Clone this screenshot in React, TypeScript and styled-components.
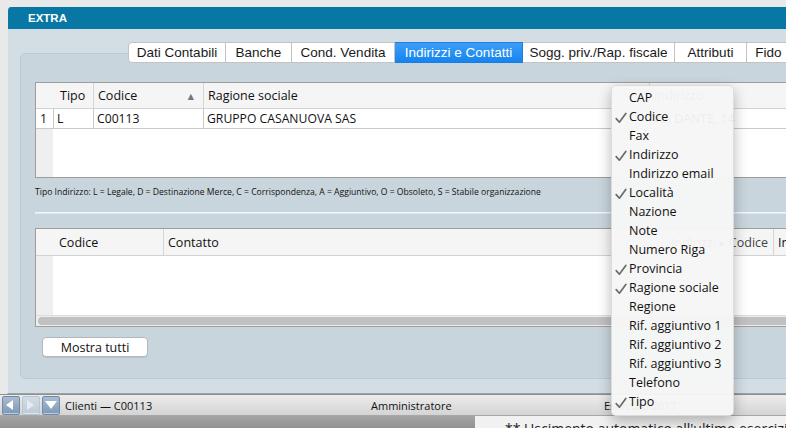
import React from 'react'
import styled, { createGlobalStyle } from 'styled-components'

const GlobalStyle = createGlobalStyle`
    html, body {
        margin: 0;
        padding: 0;
        background: #e9e9e9;
    }
    * {
        box-sizing: border-box;
    }
`

const Screen = styled.div`
    position: relative;
    width: 786px;
    height: 428px;
    overflow: hidden;
    display: flex;
    flex-direction: column;
    background: #e9e9e9;
    font-family: 'Open Sans', 'DejaVu Sans', sans-serif;
    color: #111;
`

const WindowArea = styled.div`
    height: 394px;
    padding: 7px 0 0 7px;
    flex: none;
`

const Window = styled.div`
    width: 840px;
    height: 387px;
    display: flex;
    flex-direction: column;
    border-top-left-radius: 4px;
    overflow: hidden;
    border-left: 1px solid #e4e9ec;
    border-bottom: 1px solid #9aa4aa;
`

const TitleBar = styled.div`
    height: 22px;
    flex: none;
    background: #0877a3;
    color: #fff;
    font-family: 'Liberation Sans', Arial, sans-serif;
    font-weight: bold;
    font-size: 11.5px;
    line-height: 22px;
    padding-left: 20px;
`

const Body = styled.div`
    flex: 1;
    background: #d3dee4;
    padding: 13px 0 14px 12px;
    display: flex;
    flex-direction: column;
`

const TabRow = styled.div`
    position: relative;
    z-index: 2;
    display: flex;
    height: 21px;
    padding-left: 108px;
    flex: none;
`

const Tab = styled.div<{ $w: number; $active?: boolean }>`
    width: ${(p) => p.$w}px;
    height: 21px;
    flex: none;
    display: flex;
    align-items: center;
    justify-content: center;
    font-family: 'Liberation Sans', Arial, sans-serif;
    font-size: 13.5px;
    white-space: nowrap;
    color: ${(p) => (p.$active ? '#fff' : '#1a1a1a')};
    background: ${(p) =>
        p.$active ? 'linear-gradient(#3c9ef6, #1684ee)' : '#fff'};
    border: 1px solid ${(p) => (p.$active ? '#1a7fe0' : '#c3c3c3')};
    border-left: none;
    &:first-child {
        border-left: 1px solid #c3c3c3;
        border-radius: 4px 0 0 4px;
    }
`

const Panel = styled.div`
    flex: 1;
    margin-top: -10px;
    background: #c9d5dc;
    border: 1px solid #bccad1;
    border-radius: 5px 0 0 5px;
    padding: 28px 0 0 14px;
    display: flex;
    flex-direction: column;
`

const Table = styled.div<{ $h: number; $gap?: number }>`
    height: ${(p) => p.$h}px;
    margin-top: ${(p) => p.$gap ?? 0}px;
    flex: none;
    border: 1px solid #9d9d9d;
    border-right: none;
    background: #fff;
    display: flex;
    flex-direction: column;
    font-size: 12.2px;
`

const Row = styled.div<{ $cols: string; $h: number; $head?: boolean }>`
    display: grid;
    grid-template-columns: ${(p) => p.$cols};
    height: ${(p) => p.$h}px;
    flex: none;
    background: ${(p) => (p.$head ? '#f5f5f5' : '#fff')};
    border-bottom: 1px solid ${(p) => (p.$head ? '#d2d2d2' : '#c9c9c9')};
`

const Cell = styled.div<{ $head?: boolean; $gutter?: boolean; $faded?: boolean }>`
    display: flex;
    align-items: center;
    padding-left: ${(p) => (p.$gutter ? 4 : 3)}px;
    white-space: nowrap;
    overflow: hidden;
    color: ${(p) => (p.$faded ? '#444' : '#111')};
    border-left: 1px solid
        ${(p) => (p.$gutter ? 'transparent' : p.$head ? '#d6d6d6' : '#c9c9c9')};
    &:first-child {
        border-left: none;
    }
`

const HeadLabel = styled.span<{ $indent?: number }>`
    padding-left: ${(p) => p.$indent ?? 1}px;
    flex: 1;
    font-size: 12.5px;
`

const SortArrow = styled.span`
    font-size: 8px;
    color: #777;
    margin-right: 9px;
`

const Filler = styled.div`
    flex: 1;
    display: grid;
    grid-template-columns: 17px 1fr;
    &::before {
        content: '';
        background: #efefef;
    }
`

const Legend = styled.div`
    margin-top: 8px;
    height: 12px;
    line-height: 12px;
    font-size: 8.6px;
    color: #111;
    white-space: nowrap;
`

const Separator = styled.div`
    margin-top: 14px;
    height: 2px;
    border-top: 1px solid #f2f6f8;
    border-bottom: 1px solid #dfe7eb;
    flex: none;
`

const ScrollTrack = styled.div`
    height: 11px;
    flex: none;
    background: #ededed;
    border-top: 1px solid #dcdcdc;
    padding: 1px 2px;
`

const ScrollThumb = styled.div`
    height: 8px;
    border-radius: 4px;
    background: #c1c1c1;
`

const Button = styled.button`
    margin: 10px 0 0 7px;
    width: 106px;
    height: 20px;
    border: 1px solid #b4b8bb;
    border-radius: 4px;
    background: #fff;
    font-family: 'Open Sans', 'DejaVu Sans', sans-serif;
    font-size: 12.5px;
    color: #111;
    padding: 0;
    box-shadow: 0 1px 0 rgba(0, 0, 0, 0.08);
`

const StatusBar = styled.div`
    height: 22px;
    flex: none;
    display: grid;
    grid-template-columns: 65px 306px 233px 1fr;
    align-items: center;
    background: linear-gradient(#ececec, #d4d4d4);
    border-top: 1px solid #8f8f8f;
    border-bottom: 1px solid #a8a8a8;
    font-size: 11px;
    color: #111;
    white-space: nowrap;
`

const NavGroup = styled.div`
    display: flex;
    gap: 2px;
    padding-left: 2px;
`

const NavButton = styled.div<{ $disabled?: boolean }>`
    width: 18px;
    height: 19px;
    border-radius: 2px;
    border: 1px solid ${(p) => (p.$disabled ? '#b7c4d1' : '#6f8aa8')};
    background: ${(p) =>
        p.$disabled
            ? 'linear-gradient(#d3dce5, #bfcad6)'
            : 'linear-gradient(#aabdd2, #7c97b6)'};
    display: flex;
    align-items: center;
    justify-content: center;
    box-shadow: inset 0 -1px 0 rgba(255, 255, 255, 0.5);
`

const BottomStrip = styled.div`
    flex: 1;
    display: grid;
    grid-template-columns: 475px 1fr;
`

const DarkPane = styled.div`
    background: linear-gradient(#a4a4a4, #858585);
`

const BackText = styled.div`
    background: #f1f1f1;
    padding: 5px 0 0 30px;
    font-size: 14px;
    line-height: 16px;
    color: #222;
    white-space: nowrap;
`

const Menu = styled.div`
    position: absolute;
    left: 611px;
    top: 85px;
    width: 123px;
    padding: 3px 0;
    background: rgba(246, 246, 246, 0.96);
    border: 1px solid rgba(0, 0, 0, 0.1);
    border-radius: 5px;
    box-shadow: 0 5px 14px rgba(0, 0, 0, 0.28);
    z-index: 5;
`

const MenuItem = styled.div`
    position: relative;
    height: 19px;
    line-height: 18px;
    padding-left: 17px;
    font-size: 12.5px;
    color: #111;
    white-space: nowrap;
`

const Check = styled.svg`
    position: absolute;
    left: 3px;
    top: 4px;
`

const tabs = [
    { label: 'Dati Contabili', w: 98 },
    { label: 'Banche', w: 66 },
    { label: 'Cond. Vendita', w: 103 },
    { label: 'Indirizzi e Contatti', w: 128, active: true },
    { label: 'Sogg. priv./Rap. fiscale', w: 152 },
    { label: 'Attributi', w: 72 },
    { label: 'Fido', w: 44 },
]

const menuItems: [string, boolean][] = [
    ['CAP', false],
    ['Codice', true],
    ['Fax', false],
    ['Indirizzo', true],
    ['Indirizzo email', false],
    ['Località', true],
    ['Nazione', false],
    ['Note', false],
    ['Numero Riga', false],
    ['Provincia', true],
    ['Ragione sociale', true],
    ['Regione', false],
    ['Rif. aggiuntivo 1', false],
    ['Rif. aggiuntivo 2', false],
    ['Rif. aggiuntivo 3', false],
    ['Telefono', false],
    ['Tipo', true],
]

const COLS_TOP = '17px 40px 110px 446px 1fr'
const COLS_BOTTOM = '17px 110px 503px 107px 1fr'

const Triangle = ({ dir, color }: { dir: 'left' | 'right' | 'down'; color: string }) => {
    const pts =
        dir === 'left' ? '9,2 9,12 2,7' : dir === 'right' ? '3,2 3,12 10,7' : '1,3 13,3 7,11'
    return (
        <svg width="14" height="14" viewBox="0 0 14 14">
            <polygon points={pts} fill={color} />
        </svg>
    )
}

export default function App() {
    return (
        <Screen>
            <GlobalStyle />
            <WindowArea>
                <Window>
                    <TitleBar>EXTRA</TitleBar>
                    <Body>
                        <TabRow>
                            {tabs.map((t) => (
                                <Tab key={t.label} $w={t.w} $active={t.active}>
                                    {t.label}
                                </Tab>
                            ))}
                        </TabRow>
                        <Panel>
                            <Table $h={96}>
                                <Row $cols={COLS_TOP} $h={26} $head>
                                    <Cell $head $gutter />
                                    <Cell $head $gutter>
                                        <HeadLabel $indent={2}>Tipo</HeadLabel>
                                    </Cell>
                                    <Cell $head>
                                        <HeadLabel>Codice</HeadLabel>
                                        <SortArrow>▲</SortArrow>
                                    </Cell>
                                    <Cell $head>
                                        <HeadLabel>Ragione sociale</HeadLabel>
                                    </Cell>
                                    <Cell $head $faded>
                                        <HeadLabel $indent={1}>Indirizzo</HeadLabel>
                                    </Cell>
                                </Row>
                                <Row $cols={COLS_TOP} $h={20}>
                                    <Cell $gutter>1</Cell>
                                    <Cell>L</Cell>
                                    <Cell>C00113</Cell>
                                    <Cell>GRUPPO CASANUOVA SAS</Cell>
                                    <Cell>VIA DANTE, 14</Cell>
                                </Row>
                                <Filler />
                            </Table>
                            <Legend>
                                Tipo Indirizzo: L = Legale, D = Destinazione Merce, C =
                                Corrispondenza, A = Aggiuntivo, O = Obsoleto, S = Stabile
                                organizzazione
                            </Legend>
                            <Separator />
                            <Table $h={99} $gap={14}>
                                <Row $cols={COLS_BOTTOM} $h={27} $head>
                                    <Cell $head $gutter />
                                    <Cell $head $gutter>
                                        <HeadLabel $indent={1}>Codice</HeadLabel>
                                    </Cell>
                                    <Cell $head>
                                        <HeadLabel>Contatto</HeadLabel>
                                    </Cell>
                                    <Cell $head $faded>
                                        <HeadLabel>Indirizzi ▸ Codice</HeadLabel>
                                    </Cell>
                                    <Cell $head>
                                        <HeadLabel>Indirizzo</HeadLabel>
                                    </Cell>
                                </Row>
                                <Filler />
                                <ScrollTrack>
                                    <ScrollThumb />
                                </ScrollTrack>
                            </Table>
                            <div>
                                <Button>Mostra tutti</Button>
                            </div>
                        </Panel>
                    </Body>
                </Window>
            </WindowArea>
            <StatusBar>
                <NavGroup>
                    <NavButton>
                        <Triangle dir="left" color="#fff" />
                    </NavButton>
                    <NavButton $disabled>
                        <Triangle dir="right" color="#e6ecf2" />
                    </NavButton>
                    <NavButton>
                        <Triangle dir="down" color="#fff" />
                    </NavButton>
                </NavGroup>
                <span>Clienti — C00113</span>
                <span>Amministratore</span>
                <span>Esercizio 2017</span>
            </StatusBar>
            <BottomStrip>
                <DarkPane />
                <BackText>** Uscimento automatico all'ultimo esercizio</BackText>
            </BottomStrip>
            <Menu>
                {menuItems.map(([label, checked]) => (
                    <MenuItem key={label}>
                        {checked && (
                            <Check width="12" height="12" viewBox="0 0 12 12">
                                <path
                                    d="M1.2 6.6 L4.4 10.2 L10.8 1.4"
                                    fill="none"
                                    stroke="#6b6b6b"
                                    strokeWidth="1.7"
                                    strokeLinecap="round"
                                    strokeLinejoin="round"
                                />
                            </Check>
                        )}
                        {label}
                    </MenuItem>
                ))}
            </Menu>
        </Screen>
    )
}
